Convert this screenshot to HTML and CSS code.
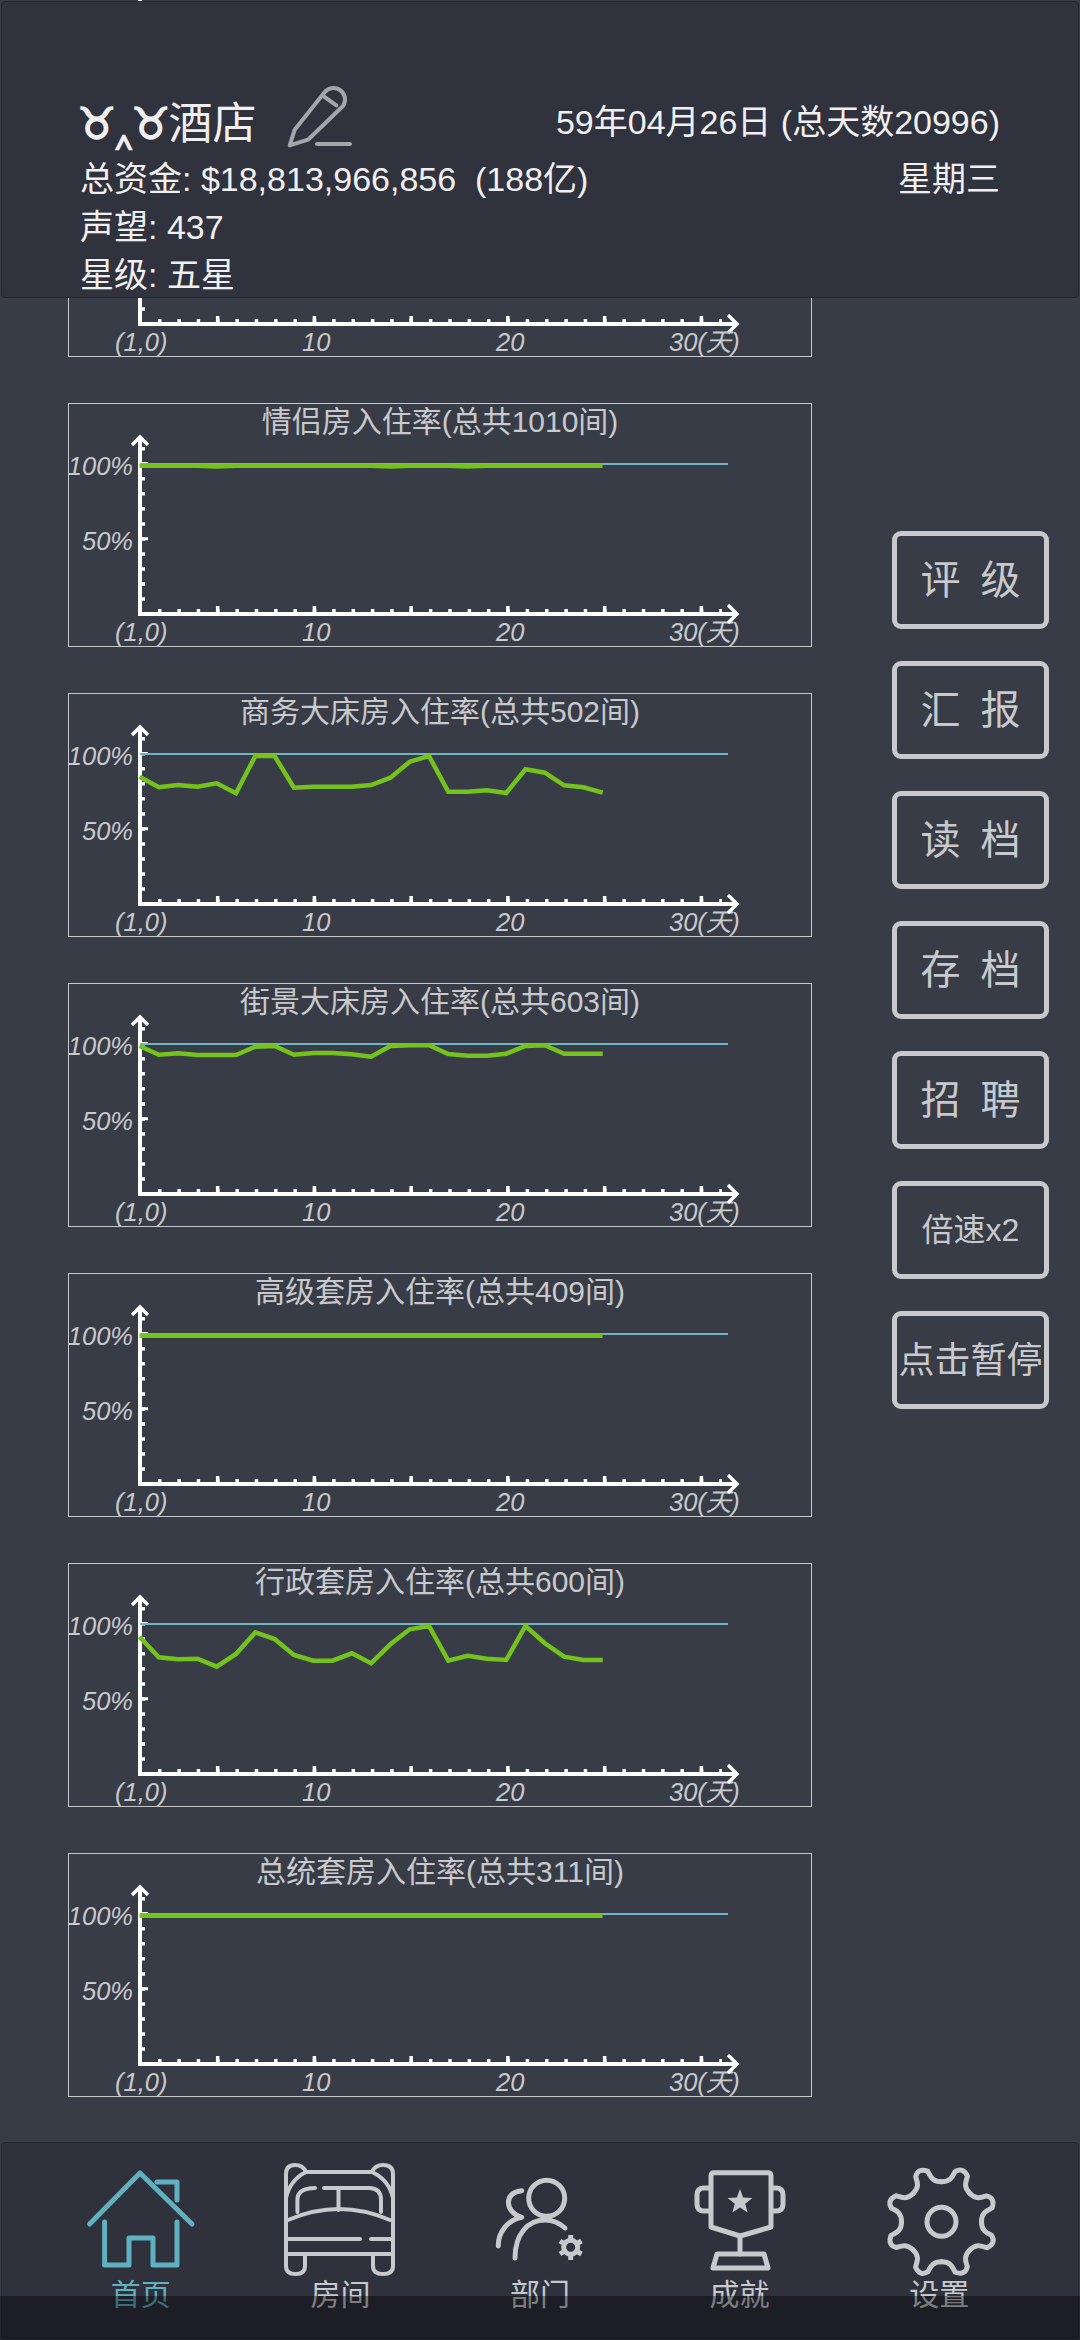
FILE: index.html
```html
<!DOCTYPE html>
<html lang="zh">
<head>
  <meta charset="UTF-8">
  <meta name="viewport" content="width=device-width, initial-scale=1.0">
  <link rel="stylesheet" href="styles.css">
</head>
<body>
  <!-- shared chart parts -->
  <svg class="svg-defs" width="0" height="0">
    <defs>
      <g id="axes">
        <path class="axis-line" d="M72 35V212.5M70 211H669"/>
        <path class="axis-arrow" d="M64 42L72 34L80 42M660 202L669 211L660 220"/>
        <path class="tick-y" d="M75.5 44V200"/>
        <path class="tick-y-long" d="M74 60.5H80M74 135.7H80"/>
        <path class="tick-x" d="M90 207.5H654"/>
        <path class="tick-x-long" d="M147.9 206H636"/>
      </g>
      <path id="tooth" d="M0 -40C9 -40 11 -45 13.500 -50Q21.500 -55 26 -45.500C24 -39 22 -34.500 28.300 -28.300"/>
    </defs>
  </svg>

  <div class="page">
    <div class="charts">
      <div class="chart offscreen"><svg class="chart-svg" viewBox="1 1 742 242"><use href="#axes"/></svg></div>

      <div class="chart">
        <svg class="chart-svg" viewBox="1 1 742 242">
          <use href="#axes"/>
          <text class="axis-label" x="47" y="238">(1,0)</text>
          <text class="axis-label" x="234" y="238">10</text>
          <text class="axis-label" x="428" y="238">20</text>
          <text class="axis-label" x="601" y="238">30(天)</text>
        </svg>
      </div>

      <div class="chart">
        <svg class="chart-svg" viewBox="1 1 742 242">
          <text class="chart-title" x="372" y="29">情侣房入住率(总共1010间)</text>
          <text class="axis-label end" x="65" y="72">100%</text>
          <text class="axis-label end" x="65" y="147">50%</text>
          <text class="axis-label" x="47" y="238">(1,0)</text>
          <text class="axis-label" x="234" y="238">10</text>
          <text class="axis-label" x="428" y="238">20</text>
          <text class="axis-label" x="601" y="238">30(天)</text>
          <use href="#axes"/>
          <path class="full-line" d="M72 61H660"/>
          <polyline class="rate-line" points="70,62.7 128,62.7 147,63.6 166,62.7 302,62.7 321,63.6 340,62.7 379,62.7 398,63.6 417,62.7 533,62.7"/>
        </svg>
      </div>

      <div class="chart">
        <svg class="chart-svg" viewBox="1 1 742 242">
          <text class="chart-title" x="372" y="29">商务大床房入住率(总共502间)</text>
          <text class="axis-label end" x="65" y="72">100%</text>
          <text class="axis-label end" x="65" y="147">50%</text>
          <text class="axis-label" x="47" y="238">(1,0)</text>
          <text class="axis-label" x="234" y="238">10</text>
          <text class="axis-label" x="428" y="238">20</text>
          <text class="axis-label" x="601" y="238">30(天)</text>
          <use href="#axes"/>
          <path class="full-line" d="M72 61H660"/>
          <polyline class="rate-line" points="70,83.7 89.3,94.3 108.6,92 127.9,93.7 147.2,90.3 166.5,100.3 185.8,63 205.1,63 224.4,94.7 243.7,93.7 263,93.7 282.3,93.7 301.6,92 320.9,84.7 340.2,68.7 359.5,63 378.8,98.7 398.1,98.7 417.4,97.3 436.7,100 456,76.3 475.3,79.7 494.6,92.3 513.9,94.3 533.2,99.7"/>
        </svg>
      </div>

      <div class="chart">
        <svg class="chart-svg" viewBox="1 1 742 242">
          <text class="chart-title" x="372" y="29">街景大床房入住率(总共603间)</text>
          <text class="axis-label end" x="65" y="72">100%</text>
          <text class="axis-label end" x="65" y="147">50%</text>
          <text class="axis-label" x="47" y="238">(1,0)</text>
          <text class="axis-label" x="234" y="238">10</text>
          <text class="axis-label" x="428" y="238">20</text>
          <text class="axis-label" x="601" y="238">30(天)</text>
          <use href="#axes"/>
          <path class="full-line" d="M72 61H660"/>
          <polyline class="rate-line" points="70,63 89.3,71.7 108.6,70.3 127.9,72 147.2,72 166.5,72 185.8,63.7 205.1,63 224.4,71.7 243.7,70 263,70 282.3,71.3 301.6,73.7 320.9,63 340.2,62.3 359.5,62.3 378.8,71 398.1,72.7 417.4,72.7 436.7,70.7 456,63 475.3,62.3 494.6,70.7 513.9,70.7 533.2,70.7"/>
        </svg>
      </div>

      <div class="chart">
        <svg class="chart-svg" viewBox="1 1 742 242">
          <text class="chart-title" x="372" y="29">高级套房入住率(总共409间)</text>
          <text class="axis-label end" x="65" y="72">100%</text>
          <text class="axis-label end" x="65" y="147">50%</text>
          <text class="axis-label" x="47" y="238">(1,0)</text>
          <text class="axis-label" x="234" y="238">10</text>
          <text class="axis-label" x="428" y="238">20</text>
          <text class="axis-label" x="601" y="238">30(天)</text>
          <use href="#axes"/>
          <path class="full-line" d="M72 61H660"/>
          <polyline class="rate-line" points="70,62.7 533,62.7"/>
        </svg>
      </div>

      <div class="chart">
        <svg class="chart-svg" viewBox="1 1 742 242">
          <text class="chart-title" x="372" y="29">行政套房入住率(总共600间)</text>
          <text class="axis-label end" x="65" y="72">100%</text>
          <text class="axis-label end" x="65" y="147">50%</text>
          <text class="axis-label" x="47" y="238">(1,0)</text>
          <text class="axis-label" x="234" y="238">10</text>
          <text class="axis-label" x="428" y="238">20</text>
          <text class="axis-label" x="601" y="238">30(天)</text>
          <use href="#axes"/>
          <path class="full-line" d="M72 61H660"/>
          <polyline class="rate-line" points="70,73.7 89.3,94.3 108.6,96.3 127.9,95.7 147.2,103.7 166.5,91 185.8,69.3 205.1,76 224.4,92 243.7,97.7 263,97.7 282.3,90.3 301.6,100.3 320.9,81.3 340.2,66.3 359.5,63 378.8,97.7 398.1,92.7 417.4,95.7 436.7,97 456,63 475.3,80.3 494.6,93.7 513.9,97 533.2,97"/>
        </svg>
      </div>

      <div class="chart">
        <svg class="chart-svg" viewBox="1 1 742 242">
          <text class="chart-title" x="372" y="29">总统套房入住率(总共311间)</text>
          <text class="axis-label end" x="65" y="72">100%</text>
          <text class="axis-label end" x="65" y="147">50%</text>
          <text class="axis-label" x="47" y="238">(1,0)</text>
          <text class="axis-label" x="234" y="238">10</text>
          <text class="axis-label" x="428" y="238">20</text>
          <text class="axis-label" x="601" y="238">30(天)</text>
          <use href="#axes"/>
          <path class="full-line" d="M72 61H660"/>
          <polyline class="rate-line" points="70,62.7 533,62.7"/>
        </svg>
      </div>
    </div>

    <div class="side-buttons">
      <button class="side-button">评 级</button>
      <button class="side-button">汇 报</button>
      <button class="side-button">读 档</button>
      <button class="side-button">存 档</button>
      <button class="side-button">招 聘</button>
      <button class="side-button small">倍速x2</button>
      <button class="side-button medium">点击暂停</button>
    </div>
  </div>

  <header class="top-panel">
    <div class="info-row name-row">
      <div class="hotel-name">
        <span class="name-text"><span class="kaomoji">♉︎‸♉︎</span>酒店</span>
        <svg class="edit-icon" viewBox="0 0 70 70">
          <path d="M6.7 67.3L11.7 51.7L41 15A11.5 11.5 0 0 1 60 28L25 61.7Z"/>
          <path d="M40.7 18.3L53.3 27.3"/>
          <path d="M34 66H67"/>
        </svg>
      </div>
      <span>59年04月26日 (总天数20996)</span>
    </div>
    <div class="info-row">
      <span>总资金: $18,813,966,856&nbsp; (188亿)</span>
      <span>星期三</span>
    </div>
    <div class="info-row"><span>声望: 437</span></div>
    <div class="info-row"><span>星级: 五星</span></div>
  </header>

  <nav class="tab-bar">
    <div class="tab active">
      <svg class="tab-icon" viewBox="0 0 120 120">
        <path d="M8.6 62L59 11L111 62"/>
        <path d="M23.6 60V103H48V76H72V103H96V60"/>
        <path d="M76 20H96V38"/>
      </svg>
      <span>首页</span>
    </div>
    <div class="tab">
      <svg class="tab-icon thin" viewBox="0 0 120 120">
        <path d="M6 93V12Q6 3 15 3Q23 3 26 10H92Q95 3 103 3Q113 3 113 12V93"/>
        <path d="M6 36Q10 18 26 10M113 36Q109 18 92 10"/>
        <path d="M17.4 50V38Q17.4 26 35 26M44 26H89Q101 26 101 38V50M58.5 26V48"/>
        <path d="M8 58Q59 36 110 58"/>
        <path d="M6 77H80M91 77H113M6 92H113"/>
        <path d="M6 92V104Q6 112 15.500 112Q25 112 25 104V92M93 92V104Q93 112 103 112Q113 112 113 104V92"/>
      </svg>
      <span>房间</span>
    </div>
    <div class="tab">
      <svg class="tab-icon" viewBox="0 0 120 120">
        <circle cx="66.700" cy="36.300" r="18"/>
        <path d="M35 96C35 72 48 58 65 58Q76 58 85 66"/>
        <path d="M41.700 28.700C24 30 24 50 41.700 55.300C28 58 18 70 18.300 84"/>
        <g class="small-gear">
          <circle cx="90.700" cy="85.300" r="7"/>
          <path d="M90.700 73V77M90.700 94V98M80 79L83 81M98 90L101.500 92M80 92L83 90M98 81L101.500 79"/>
        </g>
      </svg>
      <span>部门</span>
    </div>
    <div class="tab">
      <svg class="tab-icon" viewBox="0 0 120 120">
        <path d="M34 10.700H88Q91 10.700 91 14V65L60 74L31 65V14Q31 10.700 34 10.700Z"/>
        <path d="M30 26H24Q17 26 17 33V42Q17 49 24 49H30M92 26H96Q103 26 103 33V42Q103 49 96 49H92"/>
        <path d="M60 74V92"/>
        <path d="M37 92H84L88 106H33Z"/>
        <polygon class="star" points="60,27 63.200,35.600 72.400,36 65.200,41.700 67.600,50.500 60,45.500 52.400,50.500 54.800,41.700 47.600,36 56.800,35.600"/>
      </svg>
      <span>成就</span>
    </div>
    <div class="tab">
      <svg class="tab-icon" viewBox="0 0 120 120">
        <g transform="translate(62.500 59.700)">
          <use href="#tooth"/>
          <use href="#tooth" transform="rotate(45)"/>
          <use href="#tooth" transform="rotate(90)"/>
          <use href="#tooth" transform="rotate(135)"/>
          <use href="#tooth" transform="rotate(180)"/>
          <use href="#tooth" transform="rotate(225)"/>
          <use href="#tooth" transform="rotate(270)"/>
          <use href="#tooth" transform="rotate(315)"/>
          <circle r="14.500"/>
        </g>
      </svg>
      <span>设置</span>
    </div>
  </nav>

  <div class="system-nav"></div>
</body>
</html>
```

FILE: styles.css
```css
* {
  box-sizing: border-box;
}
html, body {
  margin: 0;
  padding: 0;
  height: 2340px;
  overflow: hidden;
}
body {
  position: relative;
  background-color: #383c47;
  font-family: 'Liberation Sans', 'Noto Sans CJK SC', sans-serif;
  color: #c8c9cc;
}
.svg-defs {
  display: block;
}
.page {
  display: flex;
  align-items: flex-start;
  padding-left: 68px;
}
.charts {
  display: flex;
  flex-direction: column;
  gap: 46px;
  width: 744px;
  margin-top: -177px;
}
.chart {
  height: 244px;
  border: 1px solid #c8c9cc;
}
.chart.offscreen {
  border-color: transparent;
}
.chart-svg {
  display: block;
  width: 742px;
  height: 242px;
  overflow: visible;
}
.chart-title {
  font-size: 30px;
  fill: #c8c9cc;
  text-anchor: middle;
}
.axis-label {
  font-size: 25.5px;
  font-style: italic;
  fill: #c8c9cc;
}
.axis-label.end {
  text-anchor: end;
}
.axis-line {
  fill: none;
  stroke: #fff;
  stroke-width: 4;
}
.axis-arrow {
  fill: none;
  stroke: #fff;
  stroke-width: 3.5;
}
.tick-y {
  fill: none;
  stroke: #fff;
  stroke-width: 3;
  stroke-dasharray: 3.5 11.53;
}
.tick-y-long {
  fill: none;
  stroke: #fff;
  stroke-width: 3;
}
.tick-x {
  fill: none;
  stroke: #fff;
  stroke-width: 3;
  stroke-dasharray: 3.5 15.85;
}
.tick-x-long {
  fill: none;
  stroke: #fff;
  stroke-width: 6;
  stroke-dasharray: 3.5 93.25;
}
.full-line {
  fill: none;
  stroke: #6fb5c3;
  stroke-width: 2;
}
.rate-line {
  fill: none;
  stroke: #74c31c;
  stroke-width: 4.5;
  transform: translateX(1.5px);
}
.side-buttons {
  display: flex;
  flex-direction: column;
  gap: 32px;
  width: 157px;
  margin-left: 80px;
  padding-top: 531px;
}
.side-button {
  height: 98px;
  padding: 0 0 7px;
  background: none;
  border: 5px solid #c8c9cc;
  border-radius: 9px;
  color: #c8c9cc;
  font-family: inherit;
  font-size: 40px;
  word-spacing: 9px;
  white-space: nowrap;
}
.side-button.small {
  font-size: 32px;
}
.side-button.medium {
  font-size: 36px;
}
.top-panel {
  position: absolute;
  top: 1px;
  left: 1px;
  right: 1px;
  height: 297px;
  padding: 85px 78px 0 78px;
  background-color: #30323d;
  border: 1px solid #262831;
  border-radius: 4px;
  color: #f0f0f0;
  font-size: 34px;
}
.info-row {
  display: flex;
  justify-content: space-between;
  align-items: center;
  height: 48px;
}
.name-row {
  height: 65px;
}
.hotel-name {
  display: flex;
  align-items: center;
}
.name-text {
  font-size: 44px;
}
.kaomoji {
  margin-left: -3px;
  font-weight: bold;
  letter-spacing: -1.5px;
}
.edit-icon {
  width: 70px;
  height: 70px;
  margin: -14px 0 0 26px;
  fill: none;
  stroke: #a5a6ab;
  stroke-width: 4;
  stroke-linecap: round;
  stroke-linejoin: round;
}
.tab-bar {
  position: absolute;
  top: 2142px;
  left: 1px;
  right: 1px;
  height: 197px;
  display: flex;
  padding: 19px 39px 0;
  background-color: #2f313c;
  border: 1px solid #262831;
  border-radius: 4px;
}
.tab {
  display: flex;
  flex-direction: column;
  align-items: center;
  width: 200px;
  font-size: 30px;
  line-height: 32px;
  color: #c8c9cc;
}
.tab span {
  margin-top: -3px;
}
.tab.active {
  color: #5fb1c0;
}
.tab-icon {
  width: 120px;
  height: 120px;
  fill: none;
  stroke: currentColor;
  stroke-width: 5;
  stroke-linecap: round;
  stroke-linejoin: round;
}
.tab-icon.thin {
  stroke-width: 4;
}
.star {
  fill: currentColor;
  stroke: none;
}
.small-gear {
  stroke-width: 5;
  stroke-linecap: butt;
}
.system-nav {
  position: absolute;
  left: 0;
  right: 0;
  bottom: 0;
  height: 44px;
  background-color: rgba(0, 0, 0, 0.38);
}
```
